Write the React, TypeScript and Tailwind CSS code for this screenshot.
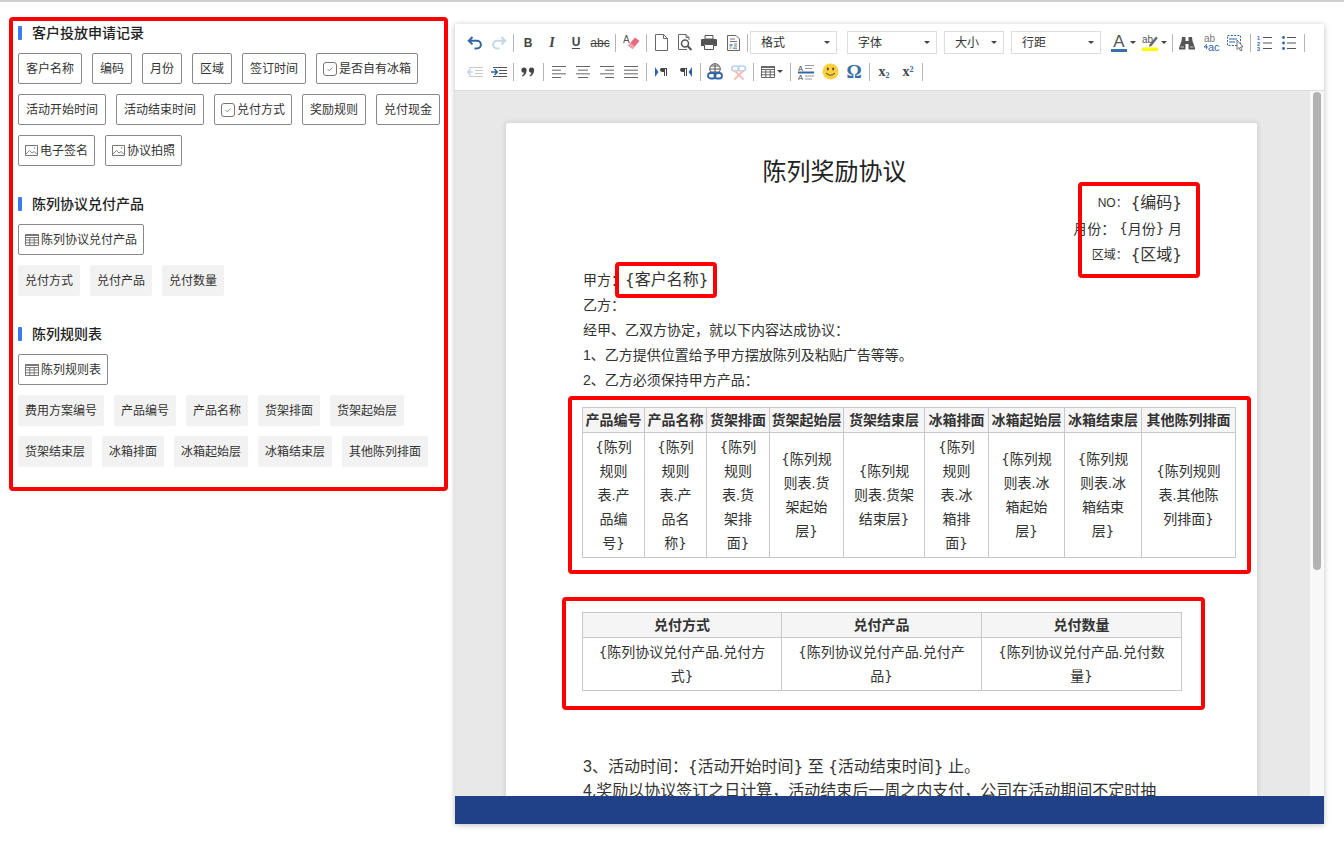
import React from 'react';

const BLUE = '#2f66a5';
const LINE = '#666666';

const Icon = ({ children, w = 18, h = 18 }: { children: React.ReactNode; w?: number; h?: number }) => (
  <svg width={w} height={h} viewBox={`0 0 ${w} ${h}`} fill="none">
    {children}
  </svg>
);

const Cell = ({ children, w = 24 }: { children: React.ReactNode; w?: number }) => (
  <div className="flex h-[29px] shrink-0 items-center justify-center" style={{ width: w }}>
    {children}
  </div>
);

const Sep = ({ w = 6 }: { w?: number }) => (
  <div className="flex h-[29px] shrink-0 items-center justify-center" style={{ width: w }}>
    <div className="h-[18px] w-px bg-[#b5b5b5]" />
  </div>
);

const Caret = () => <div className="h-0 w-0 border-x-[3px] border-t-[3px] border-x-transparent border-t-[#444]" />;

const Lines = ({ rows, color = LINE }: { rows: [number, number][]; color?: string }) => (
  <Icon w={16} h={14}>
    {rows.map(([x1, x2], i) => (
      <path key={i} d={`M${x1} ${1.5 + i * (11 / (rows.length - 1))}H${x2}`} stroke={color} strokeWidth="1" />
    ))}
  </Icon>
);

const Undo = ({ color, flip }: { color: string; flip?: boolean }) => (
  <Icon w={16} h={14}>
    <g transform={flip ? 'matrix(-1 0 0 1 16 0)' : undefined}>
      <path d="M5.5 1L1.8 4.7L5.5 8.4M2.5 4.7H10A3.9 3.9 0 0 1 10 12.5H7.5" stroke={color} strokeWidth="2" />
    </g>
  </Icon>
);

const Doc = () => (
  <Icon w={13} h={17}>
    <path d="M.5.5H8.5L12.5 4.5V16.5H.5ZM8.5.5V4.5H12.5" stroke="#666" />
  </Icon>
);

const Preview = () => (
  <Icon w={16} h={17}>
    <path d="M10 15.5H1.5V.5H9L12 3.5V6M9 .5V3.5H12" stroke="#666" />
    <circle cx="8" cy="9.5" r="3.5" stroke="#555" strokeWidth="1.5" />
    <path d="M10.5 12L14.5 16" stroke="#555" strokeWidth="2" />
  </Icon>
);

const Printer = () => (
  <Icon w={16} h={15}>
    <path d="M4 .5H12V4H4Z" stroke="#555" />
    <path d="M1 4H15Q16 4 16 5V11H13V9H3V11H0V5Q0 4 1 4Z" fill="#555" />
    <path d="M3.5 9.5H12.5V14.5H3.5Z" stroke="#555" />
  </Icon>
);

const Template = () => (
  <Icon w={13} h={16}>
    <path d="M.5.5H9L12.5 4V15.5H.5Z" stroke="#666" />
    <path d="M3 4H8M3 6.5H10M7 9H10M7 11H10" stroke="#777" />
    <rect x="2.5" y="9" width="3" height="2.5" fill="#6ea0d0" />
    <rect x="2.5" y="12" width="2" height="2" fill="#e8c060" />
    <rect x="6" y="12.5" width="4" height="1.5" fill="#6ea0d0" />
  </Icon>
);

const Eraser = () => (
  <Icon w={17} h={17}>
    <text x="0" y="9" fontSize="10" fill="#555" fontFamily="Liberation Sans">A</text>
    <path d="M5 11.5L12 3.5L16.5 7L9.5 15Z" fill="#e8687c" />
    <path d="M5 11.5L7.5 9L12 12.5L9.5 15Z" fill="#f1a0ac" />
  </Icon>
);

const Quote = () => (
  <Icon w={14} h={10}>
    <path d="M3 0.5A2.6 2.6 0 0 1 5.6 3.2Q5.6 7.5 1.5 9.5L1 8.6Q3 7.3 3 5.7A2.6 2.6 0 0 1 3 .5ZM10.5 .5A2.6 2.6 0 0 1 13.1 3.2Q13.1 7.5 9 9.5L8.5 8.6Q10.5 7.3 10.5 5.7A2.6 2.6 0 0 1 10.5 .5Z" fill="#444" />
  </Icon>
);

const Indent = ({ out }: { out?: boolean }) => {
  const color = out ? '#c3d5e8' : BLUE;
  const line = out ? '#c8c8c8' : '#555';
  return (
    <Icon w={16} h={12}>
      <path d="M2 1.5H16M8 4.5H16M8 7.5H16M2 10.5H16" stroke={line} />
      {out ? (
        <path d="M6 6H1M3.5 3L.7 6L3.5 9" stroke={color} strokeWidth="1.6" />
      ) : (
        <path d="M0 6H5.5M3.5 3L6.3 6L3.5 9" stroke={color} strokeWidth="1.6" />
      )}
    </Icon>
  );
};

const Direction = ({ rtl }: { rtl?: boolean }) => (
  <Icon w={13} h={10}>
    {rtl ? (
      <>
        <path d="M2.5 1H8V9H7V2H6V9H5V5H3.5Q1 5 1 3T2.5 1Z" fill="#444" />
        <path d="M13 0V10L9.5 5Z" fill={BLUE} />
      </>
    ) : (
      <>
        <path d="M0 0V10L3.5 5Z" fill={BLUE} />
        <path d="M6.5 1H12V9H11V2H10V9H9V5H7.5Q5 5 5 3T6.5 1Z" fill="#444" />
      </>
    )}
  </Icon>
);

const LinkIcon = () => (
  <Icon w={16} h={17}>
    <circle cx="8" cy="6" r="5.3" stroke="#555" />
    <path d="M8 .7V11M3 6H13M4 3H12M4 9H12" stroke="#555" />
    <rect x="1" y="10" width="7.5" height="5.5" rx="2.7" fill="#fff" stroke={BLUE} strokeWidth="1.8" />
    <rect x="7.5" y="10" width="7.5" height="5.5" rx="2.7" stroke={BLUE} strokeWidth="1.8" />
  </Icon>
);

const Unlink = () => (
  <Icon w={16} h={16}>
    <rect x=".8" y="2" width="7" height="5" rx="2.5" stroke="#bcd2e8" strokeWidth="1.6" />
    <rect x="7" y="2" width="7.5" height="5" rx="2.5" stroke="#bcd2e8" strokeWidth="1.6" />
    <path d="M3.5 6.5L12.5 15.5M12.5 6.5L3.5 15.5" stroke="#f3bcb2" strokeWidth="1.8" />
  </Icon>
);

const TableIcon = ({ color = '#666' }: { color?: string }) => (
  <Icon w={14} h={12}>
    <path d="M.5.5H13.5V11.5H.5Z" stroke={color} />
    <path d="M.5 3.5H13.5M.5 6H13.5M.5 8.8H13.5M4.8 3.5V11.5M9.2 3.5V11.5" stroke={color} />
    <path d="M.5 1H13.5" stroke={color} strokeWidth="2" />
  </Icon>
);

const LineHeight = () => (
  <Icon w={16} h={16}>
    <text x="0" y="6.5" fontSize="7.5" fill="#444" fontFamily="Liberation Sans">A</text>
    <text x="0" y="15.5" fontSize="7.5" fill="#444" fontFamily="Liberation Sans">A</text>
    <path d="M7 1.5H16M7 4.5H14M7 12H16M7 15H14" stroke="#999" />
    <path d="M0 8.5H16" stroke={BLUE} strokeWidth="2" />
  </Icon>
);

const Smile = () => (
  <Icon w={17} h={17}>
    <circle cx="8.5" cy="8.5" r="8" fill="#ffcf3c" />
    <ellipse cx="5.8" cy="6" rx="1" ry="1.4" fill="#444" />
    <ellipse cx="11.2" cy="6" rx="1" ry="1.4" fill="#444" />
    <path d="M4 10Q8.5 14.5 13 10" stroke="#444" strokeWidth="1" />
  </Icon>
);

const FontColor = () => (
  <div className="flex h-[18px] w-4 flex-col items-center">
    <span className="h-[14px] font-['Liberation_Sans'] text-[17px] leading-[15px] text-[#555]">A</span>
    <div className="mt-[1px] h-[3px] w-4 bg-[#3a6ea5]" />
  </div>
);

const Highlight = () => (
  <Icon w={16} h={17}>
    <text x="0" y="9" fontSize="10" fill="#555" fontFamily="Liberation Sans">ab</text>
    <path d="M7.5 10.5L14 2.5L15.8 4L9.5 12L7 12.8Z" fill="#666" />
    <rect y="13.5" width="16" height="3.5" fill="#ffff00" />
  </Icon>
);

const Binoculars = () => (
  <Icon w={16} h={14}>
    <path d="M3 1H6.5V5H9.5V1H13L13.5 5L16 12V13.5H9.5V8H6.5V13.5H0V12L2.5 5Z" fill="#555" />
    <path d="M1.5 11H5M11 11H14.5" stroke="#fff" strokeWidth=".7" />
  </Icon>
);

const Replace = () => (
  <Icon w={17} h={17}>
    <text x="1" y="7.5" fontSize="10" fill="#777" fontFamily="Liberation Sans">ab</text>
    <text x="5" y="16.5" fontSize="11" fill={BLUE} fontFamily="Liberation Sans">ac</text>
    <path d="M4 10L1 13H5M3.5 11.5V15" stroke={BLUE} strokeWidth=".9" />
  </Icon>
);

const SelectAll = () => (
  <Icon w={17} h={16}>
    <path d="M.5.5H13.5V10.5H.5Z" stroke={BLUE} strokeDasharray="2 1.3" />
    <path d="M2 4H10M2 7H8" stroke={BLUE} />
    <path d="M10 5V14.5L12 12.5L13.5 16L15 15.3L13.5 12H16Z" fill="#fff" stroke="#666" strokeWidth=".9" />
  </Icon>
);

const Ordered = () => (
  <Icon w={16} h={16}>
    <text x="0" y="5" fontSize="5.5" fontWeight="bold" fill={BLUE} fontFamily="Liberation Sans">1</text>
    <text x="0" y="10.5" fontSize="5.5" fontWeight="bold" fill={BLUE} fontFamily="Liberation Sans">2</text>
    <text x="0" y="16" fontSize="5.5" fontWeight="bold" fill={BLUE} fontFamily="Liberation Sans">3</text>
    <path d="M6 2.5H15M6 8H15M6 13.5H15" stroke="#555" />
  </Icon>
);

const Bullets = () => (
  <Icon w={14} h={14}>
    <circle cx="1.5" cy="1.5" r="1.4" fill={BLUE} />
    <circle cx="1.5" cy="7" r="1.4" fill={BLUE} />
    <circle cx="1.5" cy="12.5" r="1.4" fill={BLUE} />
    <path d="M5 1.5H14M5 7H14M5 12.5H14" stroke="#555" />
  </Icon>
);

const SmallCheck = () => (
  <svg width="14" height="14" viewBox="0 0 14 14" fill="none">
    <rect x=".5" y=".5" width="13" height="13" rx="2.5" stroke="#777" />
    <path d="M4.5 7L6.3 8.8L9.5 5.5" stroke="#888" />
  </svg>
);

const SmallImage = () => (
  <svg width="13" height="11" viewBox="0 0 13 11" fill="none">
    <path d="M.5.5H12.5V10.5H.5Z" stroke="#777" />
    <path d="M1 9L4.5 5.5L7 8L9 6.5L12 9" stroke="#888" />
    <circle cx="9.5" cy="3" r=".8" fill="#888" />
  </svg>
);

type FieldKind = 'check' | 'image' | 'table' | undefined;

const Field = ({ label, kind }: { label: string; kind?: FieldKind }) => (
  <div className={`flex h-[31px] items-center gap-[2px] rounded-[2px] border border-[#888] text-xs text-[#333] ${kind ? 'px-[6px]' : 'px-[7px]'}`}>
    {kind === 'check' && <SmallCheck />}
    {kind === 'image' && <SmallImage />}
    {kind === 'table' && <TableIcon color="#777" />}
    <span>{label}</span>
  </div>
);

const Tag = ({ label }: { label: string }) => (
  <div className="flex h-[31px] items-center rounded-[2px] bg-[#f2f2f2] px-[7px] text-xs text-[#333]">{label}</div>
);

const Heading = ({ title, className = '' }: { title: string; className?: string }) => (
  <div className={`mb-2 flex h-6 items-center gap-[10px] ${className}`}>
    <div className="h-[14px] w-1 rounded-[1px] bg-[#3b7de8]" />
    <span className="text-sm font-medium text-[#222]">{title}</span>
  </div>
);

const customerFields: { label: string; kind?: FieldKind }[] = [
  { label: '客户名称' },
  { label: '编码' },
  { label: '月份' },
  { label: '区域' },
  { label: '签订时间' },
  { label: '是否自有冰箱', kind: 'check' },
  { label: '活动开始时间' },
  { label: '活动结束时间' },
  { label: '兑付方式', kind: 'check' },
  { label: '奖励规则' },
  { label: '兑付现金' },
  { label: '电子签名', kind: 'image' },
  { label: '协议拍照', kind: 'image' },
];

const ruleTags = ['费用方案编号', '产品编号', '产品名称', '货架排面', '货架起始层', '货架结束层', '冰箱排面', '冰箱起始层', '冰箱结束层', '其他陈列排面'];

const Sidebar = () => (
  <div className="ml-[9px] mt-[15px] h-[474px] w-[439px] shrink-0 rounded-[4px] border-4 border-[#ff0000] pl-[5px]">
    <Heading title="客户投放申请记录" />
    <div className="flex flex-wrap gap-[10px]">
      {customerFields.map((f) => (
        <Field key={f.label} label={f.label} kind={f.kind} />
      ))}
    </div>

    <Heading title="陈列协议兑付产品" className="mt-[26px]" />
    <div className="flex flex-wrap gap-[10px]">
      <Field label="陈列协议兑付产品" kind="table" />
      <div className="flex w-full gap-[10px]">
        {['兑付方式', '兑付产品', '兑付数量'].map((t) => (
          <Tag key={t} label={t} />
        ))}
      </div>
    </div>

    <Heading title="陈列规则表" className="mt-[26px]" />
    <div className="flex flex-wrap gap-[10px]">
      <Field label="陈列规则表" kind="table" />
      <div className="flex w-full flex-wrap gap-[10px]">
        {ruleTags.map((t) => (
          <Tag key={t} label={t} />
        ))}
      </div>
    </div>
  </div>
);

const SelectBox = ({ label, width }: { label: string; width: number }) => (
  <div className="flex h-[23px] shrink-0 items-center justify-between border border-[#ddd] pl-[10px] pr-[6px] text-xs text-[#333]" style={{ width }}>
    <span>{label}</span>
    <Caret />
  </div>
);

const Toolbar = () => (
  <div className="h-[67px] shrink-0 border-b border-[#ddd] bg-white pl-[8px] pt-[4px]">
    <div className="flex h-[29px] items-center">
      <Cell><Undo color={BLUE} /></Cell>
      <Cell><Undo color="#c2d6ea" flip /></Cell>
      <Sep w={5} />
      <Cell><span className="font-['Liberation_Sans'] text-xs font-bold text-[#444]">B</span></Cell>
      <Cell><span className="font-['Liberation_Serif'] text-sm font-bold italic text-[#444]">I</span></Cell>
      <Cell><span className="border-b border-[#444] font-['Liberation_Sans'] text-xs font-bold leading-[12px] text-[#444]">U</span></Cell>
      <Cell><span className="font-['Liberation_Sans'] text-xs text-[#444] line-through">abc</span></Cell>
      <Sep w={7} />
      <Cell><Eraser /></Cell>
      <Sep />
      <Cell><Doc /></Cell>
      <Cell><Preview /></Cell>
      <Cell><Printer /></Cell>
      <Cell><Template /></Cell>
      <Sep w={5} />
      <div className="flex items-center gap-[10px]">
        <SelectBox label="格式" width={87} />
        <SelectBox label="字体" width={90} />
      </div>
      <div className="ml-[7px] flex items-center gap-[7px]">
        <SelectBox label="大小" width={60} />
        <SelectBox label="行距" width={90} />
      </div>
      <div className="ml-[8px] flex w-[30px] shrink-0 items-center gap-[3px] pl-[2px]"><FontColor /><Caret /></div>
      <div className="flex w-[30px] shrink-0 items-center gap-[3px] pl-[3px]"><Highlight /><Caret /></div>
      <Sep />
      <Cell><Binoculars /></Cell>
      <Cell><Replace /></Cell>
      <Cell><SelectAll /></Cell>
      <Sep />
      <Cell><Ordered /></Cell>
      <Cell><Bullets /></Cell>
      <Sep />
    </div>
    <div className="flex h-[29px] items-center">
      <Cell><Indent out /></Cell>
      <Cell><Indent /></Cell>
      <Sep w={5} />
      <Cell><Quote /></Cell>
      <Sep w={7} />
      <Cell><Lines rows={[[1, 15], [1, 10], [1, 15], [1, 10]]} /></Cell>
      <Cell><Lines rows={[[1, 15], [3, 13], [1, 15], [3, 13]]} /></Cell>
      <Cell><Lines rows={[[1, 15], [6, 15], [1, 15], [6, 15]]} /></Cell>
      <Cell><Lines rows={[[1, 15], [1, 15], [1, 15], [1, 15]]} /></Cell>
      <Sep />
      <Cell><Direction /></Cell>
      <Cell><Direction rtl /></Cell>
      <Sep />
      <Cell><LinkIcon /></Cell>
      <Cell><Unlink /></Cell>
      <Sep w={5} />
      <div className="flex w-[31px] shrink-0 items-center gap-[2px] pl-[5px]"><TableIcon /><Caret /></div>
      <Sep w={7} />
      <Cell><LineHeight /></Cell>
      <Cell><Smile /></Cell>
      <Cell><span className="font-['Liberation_Serif'] text-[19px] font-bold leading-none text-[#3a6ea5]">Ω</span></Cell>
      <Sep />
      <Cell>
        <span className="font-['Liberation_Serif'] text-sm font-bold text-[#444]">
          x<sub className="text-[8px] text-[#2f66a5]">2</sub>
        </span>
      </Cell>
      <Cell>
        <span className="font-['Liberation_Serif'] text-sm font-bold text-[#444]">
          x<sup className="text-[8px] text-[#2f66a5]">2</sup>
        </span>
      </Cell>
      <Sep w={5} />
    </div>
  </div>
);

// template strings: braces are wider in the reference than in Liberation
const Tpl = ({ text }: { text: string }) => (
  <>
    {text.split(/([{}])/).map((part, i) =>
      part === '{' || part === '}' ? (
        <span key={i} className="font-['DejaVu_Sans'] text-[0.95em] leading-none">
          {part}
        </span>
      ) : (
        part
      )
    )}
  </>
);

const ruleColumns: { head: string; width: number; lines: string[] }[] = [
  { head: '产品编号', width: 62, lines: ['{陈列', '规则', '表.产', '品编', '号}'] },
  { head: '产品名称', width: 62, lines: ['{陈列', '规则', '表.产', '品名', '称}'] },
  { head: '货架排面', width: 63, lines: ['{陈列', '规则', '表.货', '架排', '面}'] },
  { head: '货架起始层', width: 74, lines: ['{陈列规', '则表.货', '架起始', '层}'] },
  { head: '货架结束层', width: 81, lines: ['{陈列规', '则表.货架', '结束层}'] },
  { head: '冰箱排面', width: 64, lines: ['{陈列', '规则', '表.冰', '箱排', '面}'] },
  { head: '冰箱起始层', width: 76, lines: ['{陈列规', '则表.冰', '箱起始', '层}'] },
  { head: '冰箱结束层', width: 77, lines: ['{陈列规', '则表.冰', '箱结束', '层}'] },
  { head: '其他陈列排面', width: 94, lines: ['{陈列规则', '表.其他陈', '列排面}'] },
];

const payColumns = [
  { head: '兑付方式', width: 199, lines: ['{陈列协议兑付产品.兑付方', '式}'] },
  { head: '兑付产品', width: 200, lines: ['{陈列协议兑付产品.兑付产', '品}'] },
  { head: '兑付数量', width: 200, lines: ['{陈列协议兑付产品.兑付数', '量}'] },
];

const DocTable = ({ columns, className = '' }: { columns: { head: string; width: number; lines: string[] }[]; className?: string }) => (
  <table className={`-ml-px table-fixed border-collapse text-sm leading-6 text-[#333] ${className}`}>
    <colgroup>
      {columns.map((c) => (
        <col key={c.head} style={{ width: c.width }} />
      ))}
    </colgroup>
    <thead>
      <tr>
        {columns.map((c) => (
          <th key={c.head} className="whitespace-nowrap border border-[#c8c8c8] bg-[#f5f5f5] p-0 font-bold">
            {c.head}
          </th>
        ))}
      </tr>
    </thead>
    <tbody>
      <tr>
        {columns.map((c) => (
          <td key={c.head} className="whitespace-nowrap border border-[#c8c8c8] p-0 py-[2px] text-center align-middle">
            {c.lines.map((l) => (
              <div key={l} className="h-6">
                <Tpl text={l} />
              </div>
            ))}
          </td>
        ))}
      </tr>
    </tbody>
  </table>
);

const RedBox = ({ className }: { className: string }) => (
  <div className={`pointer-events-none absolute rounded-[4px] border-4 border-[#ff0000] ${className}`} />
);

const Page = () => (
  <div className="relative min-h-[900px] w-[753px] shrink-0 rounded-[3px] border border-[#dcdcdc] bg-white pl-[77px] pt-[31px] text-sm text-[#333] shadow-[0_0_4px_rgba(0,0,0,0.12)]">
    <h1 className="h-9 w-[503px] text-center text-2xl leading-9 text-[#222]">陈列奖励协议</h1>
    <div className="w-[599px] text-right">
      <div className="flex h-[26px] items-center justify-end gap-[3px] text-xs"><span>NO：</span><span className="text-base"><Tpl text="{编码}" /></span></div>
      <div className="flex h-[26px] items-center justify-end whitespace-pre"><Tpl text="月份： {月份} 月" /></div>
      <div className="flex h-[25px] items-center justify-end gap-[3px] text-xs"><span>区域：</span><span className="text-base"><Tpl text="{区域}" /></span></div>
    </div>
    <div className="flex h-[26px] items-center"><span>甲方：</span><span className="text-base"><Tpl text="{客户名称}" /></span></div>
    <div className="h-[25px] leading-[25px]">乙方：</div>
    <div className="h-[25px] leading-[25px]">经甲、乙双方协定，就以下内容达成协议：</div>
    <div className="h-[25px] leading-[25px]">1、乙方提供位置给予甲方摆放陈列及粘贴广告等等。</div>
    <div className="h-[25px] leading-[25px]">2、乙方必须保持甲方产品：</div>

    <DocTable columns={ruleColumns} className="mt-[14px]" />
    <DocTable columns={payColumns} className="mt-[54px]" />

    <div className="mt-[63px] h-[24px] text-base leading-[25px]"><Tpl text="3、活动时间：{活动开始时间} 至 {活动结束时间} 止。" /></div>
    <div className="h-[25px] text-base leading-[25px]">4.奖励以协议签订之日计算，活动结束后一周之内支付，公司在活动期间不定时抽</div>

    {/* annotation boxes drawn over the document */}
    <RedBox className="left-[572px] top-[59px] h-[96px] w-[122px]" />
    <RedBox className="left-[109px] top-[139px] h-[36px] w-[102px]" />
    <RedBox className="left-[62px] top-[273px] h-[178px] w-[683px]" />
    <RedBox className="left-[56px] top-[474px] h-[113px] w-[643px]" />
  </div>
);

const Editor = () => (
  <div className="ml-[7px] mt-[22px] flex h-[800px] w-[869px] shrink-0 flex-col bg-white shadow-[0_1px_6px_rgba(0,0,0,0.25)]">
    <Toolbar />
    <div className="flex min-h-0 flex-1">
      <div className="min-w-0 flex-1 overflow-hidden bg-[#e8e8e8] pl-[50px] pt-[31px]">
        <Page />
      </div>
      <div className="w-[14px] shrink-0 bg-[#f8f8f8] pl-[3px] pt-[1px]">
        <div className="h-[478px] w-2 rounded-full bg-[#b2b2b2]" />
      </div>
    </div>
    <div className="h-7 shrink-0 bg-[#214186]" />
  </div>
);

export default function App() {
  return (
    <div className="flex h-[861px] w-[1344px] items-start overflow-hidden border-t-2 border-[#d0d0d0] bg-white font-['Liberation_Sans','Noto_Sans_CJK_SC',sans-serif]">
      <Sidebar />
      <Editor />
    </div>
  );
}
